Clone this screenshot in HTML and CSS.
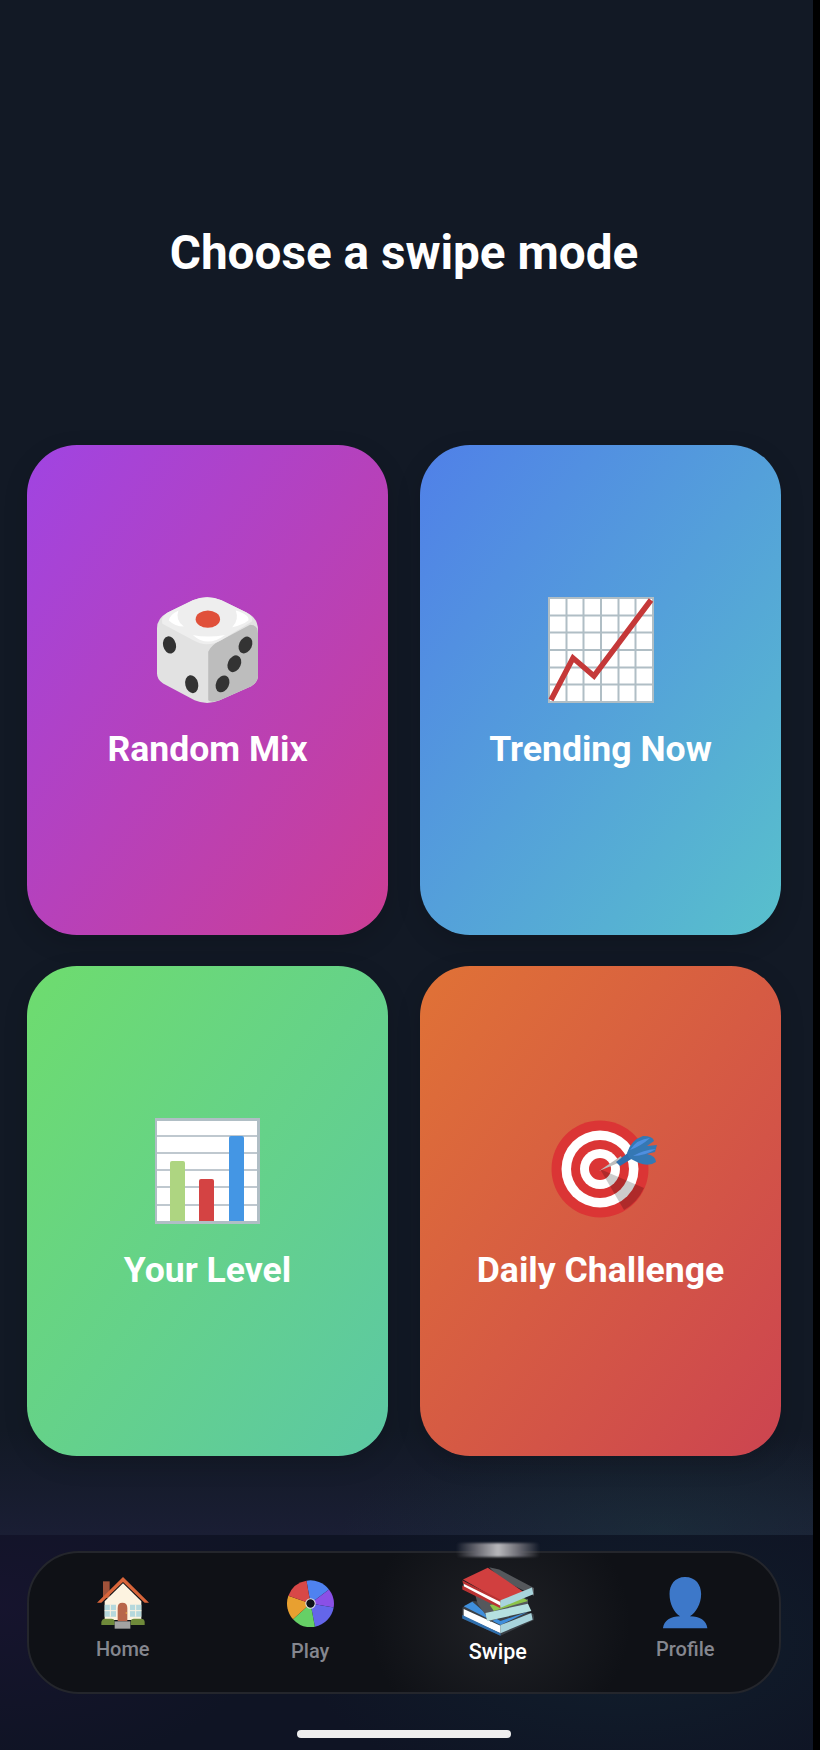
FILE: index.html
```html
<!DOCTYPE html>
<html lang="en">
<head>
<meta charset="utf-8">
<title>Choose a swipe mode</title>
<link rel="stylesheet" href="styles.css">
</head>
<body>
<div class="screen">
  <main class="main">
    <h1 class="title">Choose a swipe mode</h1>
    <div class="modes">
      <button class="mode mode-random">
        <svg class="mode-icon mode-icon-dice" viewBox="75 52 282 316" preserveAspectRatio="none" aria-hidden="true">
          <path d="M175 62 Q215 44 255 62 L325 98 Q357 114 357 150 L357 285 Q357 306 338 318 L250 360 Q215 376 180 360 L92 310 Q75 298 75 280 L75 145 Q75 115 105 98 Z" fill="#e2e2e2"/>
          <path d="M218 215 Q225 195 255 180 L335 135 Q357 135 357 160 L357 285 Q357 306 338 318 L250 360 Q225 368 218 360 Z" fill="#bdbdbd"/>
          <path d="M175 62 Q215 44 255 62 L325 98 Q345 110 340 125 L255 180 Q215 205 175 180 L90 132 Q85 110 105 98 Z" fill="#eeeeee"/>
          <path d="M108 122 Q110 105 135 92 Q125 120 150 140 Q125 140 108 122 Z M295 92 Q335 105 330 122 Q315 135 285 142 Q305 120 295 92 Z M175 165 Q215 175 265 165 Q215 205 175 165 Z" fill="#fff"/>
          <ellipse cx="217" cy="118" rx="34" ry="26" fill="#e0503a"/>
          <ellipse cx="110" cy="195" rx="18" ry="26" transform="rotate(-12 110 195)" fill="#333"/>
          <ellipse cx="172" cy="312" rx="18" ry="27" transform="rotate(-12 172 312)" fill="#333"/>
          <ellipse cx="322" cy="195" rx="18" ry="26" transform="rotate(22 322 195)" fill="#333"/>
          <ellipse cx="291" cy="251" rx="18" ry="26" transform="rotate(22 291 251)" fill="#333"/>
          <ellipse cx="258" cy="311" rx="18" ry="26" transform="rotate(22 258 311)" fill="#333"/>
        </svg>
        <span class="mode-label">Random Mix</span>
      </button>
      <button class="mode mode-trending">
        <svg class="mode-icon" viewBox="0 0 106 106" aria-hidden="true">
          <rect x="1" y="1" width="104" height="104" fill="#fff" stroke="#b0bec5" stroke-width="2"/>
          <path d="M18.500 1V105M35.500 1V105M53 1V105M70.500 1V105M87.500 1V105M1 18.500H105M1 35.500H105M1 53H105M1 70.500H105M1 87.500H105" stroke="#b0bec5" stroke-width="2" fill="none"/>
          <path d="M3 103 L25 61 L46 79 L103 3" stroke="#c53838" stroke-width="5.500" fill="none"/>
        </svg>
        <span class="mode-label">Trending Now</span>
      </button>
      <button class="mode mode-level">
        <svg class="mode-icon" viewBox="1 0 106 106" aria-hidden="true">
          <rect x="1.500" y="1.500" width="103" height="103" fill="#fff" stroke="#b0bec5" stroke-width="3"/>
          <path d="M3 18H103M3 35H103M3 52H103M3 69H103M3 87H103" stroke="#bfc8cf" stroke-width="2" fill="none"/>
          <path d="M16 45 Q16 43 18 43 H29 Q31 43 31 45 V103 H16Z" fill="#aed581"/>
          <path d="M45 63 Q45 61 47 61 H58 Q60 61 60 63 V103 H45Z" fill="#d44343"/>
          <path d="M75 20 Q75 18 77 18 H88 Q90 18 90 20 V103 H75Z" fill="#4496e4"/>
        </svg>
        <span class="mode-label">Your Level</span>
      </button>
      <button class="mode mode-daily">
        <svg class="mode-icon mode-icon-open" viewBox="-3 -2 106 106" aria-hidden="true">
          <circle cx="49" cy="49" r="48.500" fill="#db3535"/>
          <circle cx="49" cy="49" r="38.500" fill="#fff"/>
          <circle cx="49" cy="49" r="29" fill="#db3535"/>
          <circle cx="49" cy="49" r="20" fill="#fff"/>
          <circle cx="49" cy="49" r="11" fill="#db3535"/>
          <path d="M49 49 L73 90 A48.500 48.500 0 0 0 93 68 Z" fill="#000" fill-opacity=".2"/>
          <path d="M48 51 L70 36 L72 41 Z" fill="#bdbdbd"/>
          <path d="M65 42 L78 32 L82 38 L69 46 Z" fill="#2f6fae"/>
          <path d="M76 33 Q80 20 92 16 Q102 16 103 21 L96 26 L106 25 L104 32 L96 34 Q105 36 105 42 Q98 47 88 43 Q82 40 78 38 Z" fill="#3578b4"/>
          <path d="M79 30 Q86 19 99 18 Q90 26 79 30 Z M82 36 Q92 30 105 29 Q94 36 82 36 Z" fill="#4f8fe0"/>
        </svg>
        <span class="mode-label">Daily Challenge</span>
      </button>
    </div>
  </main>
  <footer class="dock">
    <nav class="tabs">
      <span class="tab-glow"></span>
      <a class="tab">
        <svg class="tab-icon icon-home" viewBox="47 53 156 156" aria-hidden="true">
          <rect x="65" y="66" width="20" height="50" fill="#a0523a"/>
          <path d="M70 126 L125 72 L180 126 V182 H70Z" fill="#fdf3e0"/>
          <path d="M47 130 L125 53 L203 130 H190 L125 68 L60 130Z" fill="#d9653a"/>
          <path d="M70 136 H104 V172 H70Z M146 136 H180 V172 H146Z" fill="#b5d8dc"/>
          <path d="M87 136 V172 M70 154 H104 M163 136 V172 M146 154 H180" stroke="#fdf3e0" stroke-width="3"/>
          <path d="M109 186 V146 Q109 130 123 130 Q138 130 138 146 V186Z" fill="#b8654a"/>
          <circle cx="135" cy="161" r="2.500" fill="#f0b040"/>
          <path d="M60 197 V188 Q62 178 72 178 H90 Q100 178 100 188 V197Z M148 197 V188 Q148 178 158 178 H178 Q190 178 190 188 V197Z" fill="#6f8a3a"/>
          <rect x="100" y="186" width="47" height="22" fill="#a2a2a2"/>
        </svg>
        <span class="tab-label">Home</span>
      </a>
      <a class="tab tab-play">
        <svg class="tab-icon icon-play" viewBox="50 60 140 140" aria-hidden="true">
          <path d="M120 130 L108 62 A70 70 0 0 1 175 88Z" fill="#4f82f0"/>
          <path d="M120 130 L175 88 A70 70 0 0 1 189 142Z" fill="#8a50e6"/>
          <path d="M120 130 L189 142 A70 70 0 0 1 133 199Z" fill="#6466ea"/>
          <path d="M120 130 L133 199 A70 70 0 0 1 68 177Z" fill="#66d066"/>
          <path d="M120 130 L68 177 A70 70 0 0 1 54 107Z" fill="#e8a030"/>
          <path d="M120 130 L54 107 A70 70 0 0 1 108 62Z" fill="#d84848"/>
          <circle cx="120" cy="130" r="14" fill="#0f1218" stroke="#e6e6e6" stroke-width="3"/>
        </svg>
        <span class="tab-label">Play</span>
      </a>
      <a class="tab tab-active">
        <svg class="tab-icon icon-swipe" viewBox="65 25 215 205" aria-hidden="true">
          <path d="M66 146 L96 126 L130 128 L278 165 L282 182 L180 230 L66 178Z" fill="#3b4046"/>
          <path d="M70 142 L96 128 L135 162 L180 186 L262 158 L180 198Z" fill="#3f8fdc"/>
          <path d="M70 150 L180 200 V222 L70 172Z" fill="#fff"/>
          <path d="M66 168 L180 222 V230 L66 178Z" fill="#2f6fae"/>
          <path d="M180 198 L272 162 L276 182 L180 222Z" fill="#a8d4dc"/>
          <path d="M100 92 L135 100 L262 120 L262 138 L150 188 L112 135Z" fill="#55585c"/>
          <path d="M148 138 L250 118 L262 126 L160 156Z" fill="#8bc34a"/>
          <path d="M135 162 L262 134 L272 156 L140 186Z" fill="#b5e0e0"/>
          <path d="M146 25 L176 32 L282 88 L280 110 L180 60Z" fill="#55585c"/>
          <path d="M68 62 L142 27 L250 100 L180 126Z" fill="#d13f3f"/>
          <path d="M70 70 L180 126 V144 L70 92Z" fill="#fff"/>
          <path d="M66 64 L180 122 L180 129 L68 74Z" fill="#b83232"/>
          <path d="M66 80 L180 140 V148 L66 92Z" fill="#b83232"/>
          <path d="M180 124 L274 86 L278 106 L180 146Z" fill="#a8d4dc"/>
        </svg>
        <span class="tab-label">Swipe</span>
      </a>
      <a class="tab">
        <svg class="tab-icon icon-profile" viewBox="60 50 150 158" aria-hidden="true">
          <path d="M135 50 C168 50 184 74 184 102 C184 132 168 160 150 169 C180 170 200 180 203 206 H68 C71 180 92 170 120 169 C102 160 88 132 88 102 C88 74 104 50 135 50Z" fill="#3d78c9"/>
        </svg>
        <span class="tab-label">Profile</span>
      </a>
    </nav>
    <div class="home-bar"></div>
  </footer>
</div>
</body>
</html>
```
FILE: styles.css
```css
* { box-sizing: border-box; }
html, body { margin: 0; padding: 0; background: #000; }
body { font-family: Roboto, "Liberation Sans", sans-serif; }
.screen {
  width: 813px;
  height: 1750px;
  display: flex;
  flex-direction: column;
  background:
    radial-gradient(ellipse 320px 100px at 660px 1530px, rgba(30, 70, 70, .3), transparent),
    linear-gradient(#121925 0, #121925 1430px, #1a1e34 1535px);
}
.main { flex: 1; display: flex; flex-direction: column; padding: 0 32px 0 27px; }
.title {
  margin: 0;
  height: 445px;
  padding-top: 225px;
  color: #fff;
  font-size: 47.7px;
  line-height: 56px;
  font-weight: 700;
  text-align: center;
}
.modes { display: grid; grid-template-columns: 361px 361px; grid-auto-rows: 489.5px; gap: 31.5px 32px; }
.mode {
  border: 0;
  border-radius: 50px;
  color: #fff;
  font: inherit;
  display: flex;
  flex-direction: column;
  align-items: center;
  padding: 152px 0 0;
  gap: 24px;
  box-shadow: 0 8px 24px rgba(0, 0, 0, .15);
}
.mode-random { background: linear-gradient(to bottom right, #a044e2, #cc3e94); }
.mode-trending { background: linear-gradient(to bottom right, #5080e8, #58c0cc); }
.mode-level { background: linear-gradient(to bottom right, #6edc6e, #5cc8a4); }
.mode-daily { background: linear-gradient(to bottom right, #e07236, #cc4450); }
.mode-icon { width: 106px; height: 106px; display: block; flex: none; }
.mode-icon-dice { width: 101px; }
.mode-icon-open { overflow: visible; }
.mode-label { font-size: 35.6px; line-height: 44px; font-weight: 700; white-space: nowrap; }
.dock {
  height: 215px;
  padding: 16px 32px 0 27px;
  display: flex;
  flex-direction: column;
  align-items: center;
  background:
    radial-gradient(ellipse 280px 170px at 0 70px, rgba(40, 20, 70, .28), transparent),
    radial-gradient(ellipse 320px 160px at 620px 110px, rgba(20, 50, 60, .35), transparent),
    #0f1424;
}
.tabs {
  position: relative;
  width: 754px;
  height: 143px;
  flex: none;
  display: grid;
  grid-template-columns: repeat(4, 1fr);
  border: 2px solid #24262c;
  border-radius: 52px;
  background:
    radial-gradient(ellipse 130px 120px at 471px 70px, rgba(45, 46, 50, .55), transparent),
    #0f1116;
}
.tab-glow {
  position: absolute;
  left: 427px;
  top: -10px;
  width: 84px;
  height: 14px;
  border-radius: 4px;
  filter: blur(1px);
  background: linear-gradient(90deg, transparent, #6a6a72 25%, #b8b8bc 50%, #6a6a72 75%, transparent);
}
.tab {
  display: flex;
  flex-direction: column;
  align-items: center;
  justify-content: flex-start;
  padding-top: 24px;
  color: #85878f;
  font-size: 20px;
  font-weight: 500;
}
.tab-icon { display: block; flex: none; }
.tab-label { line-height: 23px; }
.icon-home { width: 52px; height: 52px; margin-bottom: 9px; }
.icon-play { width: 47px; height: 47px; margin: 3px 0 13px; }
.icon-profile { width: 50px; height: 52px; margin-bottom: 9px; }
.tab-active { padding-top: 14px; color: #fff; font-size: 21.5px; }
.icon-swipe { width: 72px; height: 69px; margin-bottom: 4px; }
.home-bar {
  width: 214px;
  height: 8px;
  margin-top: 36px;
  border-radius: 4px;
  background: #eee;
  flex: none;
}
```
